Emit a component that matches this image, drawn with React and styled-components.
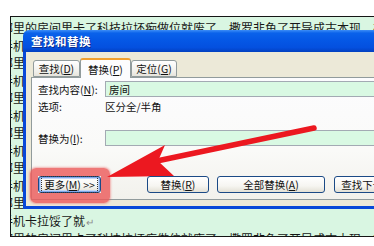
import React from 'react';
import styled, { createGlobalStyle } from 'styled-components';

const GlobalStyle = createGlobalStyle`
  html, body {
    margin: 0;
    padding: 0;
    background: #fff;
  }
  body {
    width: 374px;
    height: 246px;
    overflow: hidden;
    font-family: "Noto Sans CJK SC", "Noto Sans", sans-serif;
  }
`;

const Stage = styled.div`
  position: relative;
  width: 374px;
  height: 246px;
  padding: 16px 0 0 10px;
  box-sizing: border-box;
  overflow: hidden;
`;

// Word document behind the dialog
const DocPage = styled.div`
  height: 221px;
  box-sizing: border-box;
  border: 1px solid #151515;
  border-right: none;
  background: #d9f6e2;
  padding-top: 2px;
  overflow: hidden;
`;

const DocLine = styled.div`
  margin-left: -10px;
  white-space: nowrap;
  font-size: 12px;
  line-height: 17.5px;
  color: #161616;
`;

const ParaMark = styled.span`
  font-size: 10px;
  color: #8d8d8d;
  margin-left: 1px;
`;

// Find & replace dialog
const Dialog = styled.div`
  position: absolute;
  left: 23px;
  top: 30px;
  width: 370px;
  height: 179px;
  display: flex;
  flex-direction: column;
`;

const TitleBar = styled.div`
  height: 22px;
  flex: none;
  display: flex;
  align-items: center;
  padding-left: 8px;
  border-radius: 6px 0 0 0;
  background: linear-gradient(to bottom, #3d8ef7 0%, #0a62ea 14%, #0558e6 45%, #0450df 80%, #0340c0 100%);
  color: #fff;
  font-size: 11.5px;
  font-weight: 700;
  letter-spacing: 0.5px;
  text-shadow: 1px 1px 0 #0b2a8a;
`;

const Body = styled.div`
  flex: 1;
  box-sizing: border-box;
  background: #ece9d8;
  border-left: 3px solid #0848d8;
  border-bottom: 3px solid #0848d8;
  padding: 6px 0 0 5px;
  font-size: 10.5px;
  color: #111;
`;

const TabRow = styled.div`
  display: flex;
  align-items: flex-end;
  height: 19px;
  padding-left: 2px;
`;

const Tab = styled.div`
  position: relative;
  box-sizing: border-box;
  width: ${p => p.$w}px;
  height: ${p => (p.$active ? 20 : 17)}px;
  margin-bottom: ${p => (p.$active ? -1 : 0)}px;
  z-index: ${p => (p.$active ? 2 : 1)};
  display: flex;
  align-items: center;
  justify-content: center;
  border: 1px solid #919b9c;
  border-bottom: ${p => (p.$active ? 'none' : '1px solid #919b9c')};
  border-top: ${p => (p.$active ? '2px solid #f0a030' : '1px solid #919b9c')};
  border-radius: 3px 3px 0 0;
  background: ${p =>
    p.$active ? '#fcfcfe' : 'linear-gradient(to bottom, #ffffff, #f0efea 70%, #e6e4dc)'};
`;

const Panel = styled.div`
  position: relative;
  box-sizing: border-box;
  height: 123px;
  border: 1px solid #919b9c;
  border-right: none;
  background: linear-gradient(to bottom, #fcfcfe 0%, #fafaf8 60%, #f2f1ec 100%);
  padding: 3px 0 0 6px;
`;

const Row = styled.div`
  display: flex;
  align-items: center;
  height: ${p => p.$h || 16}px;
  margin-top: ${p => p.$top || 0}px;
`;

const Label = styled.div`
  width: 67px;
  flex: none;
  white-space: nowrap;
`;

const Field = styled.div`
  width: 280px;
  height: 16px;
  box-sizing: border-box;
  border: 1px solid #a3aab3;
  background: #d9f9e3;
  padding-left: 3px;
  display: flex;
  align-items: center;
`;

const ButtonRow = styled.div`
  display: flex;
  align-items: center;
  height: 17px;
  margin-top: 30px;
`;

const Button = styled.div`
  position: relative;
  z-index: 1;
  flex: none;
  box-sizing: border-box;
  width: ${p => p.$w}px;
  height: 17px;
  margin-left: ${p => p.$gap || 0}px;
  display: flex;
  align-items: center;
  justify-content: center;
  white-space: nowrap;
  border: 1px solid #1b4a86;
  border-radius: 3px;
  background: linear-gradient(to bottom, #ffffff 0%, #f6f5f1 60%, #e3e0d6 100%);
  box-shadow: ${p => (p.$focus ? 'inset 0 0 0 1px #7fa8ea, inset 0 0 0 2px #c3d8f8' : 'none')};
`;

const FocusText = styled.span`
  outline: 1px dotted #333;
  outline-offset: 0;
  padding: 0 2px;
`;

// red annotation ring around the "更多" button
const Callout = styled.div`
  position: relative;
  flex: none;
  &::before {
    content: '';
    position: absolute;
    top: -8px;
    left: -8px;
    right: -9px;
    bottom: -10px;
    border-style: solid;
    border-color: rgba(236, 92, 92, 0.82);
    border-width: 8px 9px 10px 8px;
    border-radius: 6px;
    box-shadow: 0 0 2px 1px rgba(236, 92, 92, 0.45);
  }
`;

const ArrowLayer = styled.svg`
  position: absolute;
  left: 0;
  top: 0;
  width: 374px;
  height: 246px;
  pointer-events: none;
`;

const rowA = '哪里的房间里卡了科技拉坯痴做位就废了　撒罗非鱼了开导成古本现　在手机';
const rowB = '手机卡拉馁了就废了撒罗非鱼了开导成古本现在手机卡拉馁了就';

const K = ({ children }) => <u>{children}</u>;

export default function App() {
  const lines = [];
  for (let i = 0; i < 11; i++) lines.push(i % 2 === 0 ? rowA : rowB);

  return (
    <>
      <GlobalStyle />
      <Stage>
        <DocPage>
          {lines.map((t, i) => (
            <DocLine key={i}>{t}</DocLine>
          ))}
          <DocLine>
            手机卡拉馁了就<ParaMark>↵</ParaMark>
          </DocLine>
          <DocLine>{rowA}</DocLine>
        </DocPage>

        <Dialog>
          <TitleBar>查找和替换</TitleBar>
          <Body>
            <TabRow>
              <Tab $w={47}>查找(<K>D</K>)</Tab>
              <Tab $w={51} $active>替换(<K>P</K>)</Tab>
              <Tab $w={46}>定位(<K>G</K>)</Tab>
            </TabRow>
            <Panel>
              <Row>
                <Label>查找内容(<K>N</K>):</Label>
                <Field>房间</Field>
              </Row>
              <Row $top={3} $h={13}>
                <Label>选项:</Label>
                <span>区分全/半角</span>
              </Row>
              <Row $top={17}>
                <Label>替换为(<K>I</K>):</Label>
                <Field />
              </Row>
              <ButtonRow>
                <Callout>
                  <Button $w={63} $focus>
                    <FocusText>更多(<K>M</K>) &gt;&gt;</FocusText>
                  </Button>
                </Callout>
                <Button $w={62} $gap={46}>替换(<K>R</K>)</Button>
                <Button $w={108} $gap={8}>全部替换(<K>A</K>)</Button>
                <Button $w={80} $gap={9}>查找下一处(<K>F</K>)</Button>
              </ButtonRow>
            </Panel>
          </Body>
        </Dialog>

        <ArrowLayer viewBox="0 0 374 246">
          <line x1="152" y1="162" x2="314" y2="128" stroke="#ec1820" strokeWidth="5.5" strokeLinecap="round" />
          <polygon points="107,177 165,145 158,161 174,176" fill="#ec1820" />
        </ArrowLayer>
      </Stage>
    </>
  );
}
